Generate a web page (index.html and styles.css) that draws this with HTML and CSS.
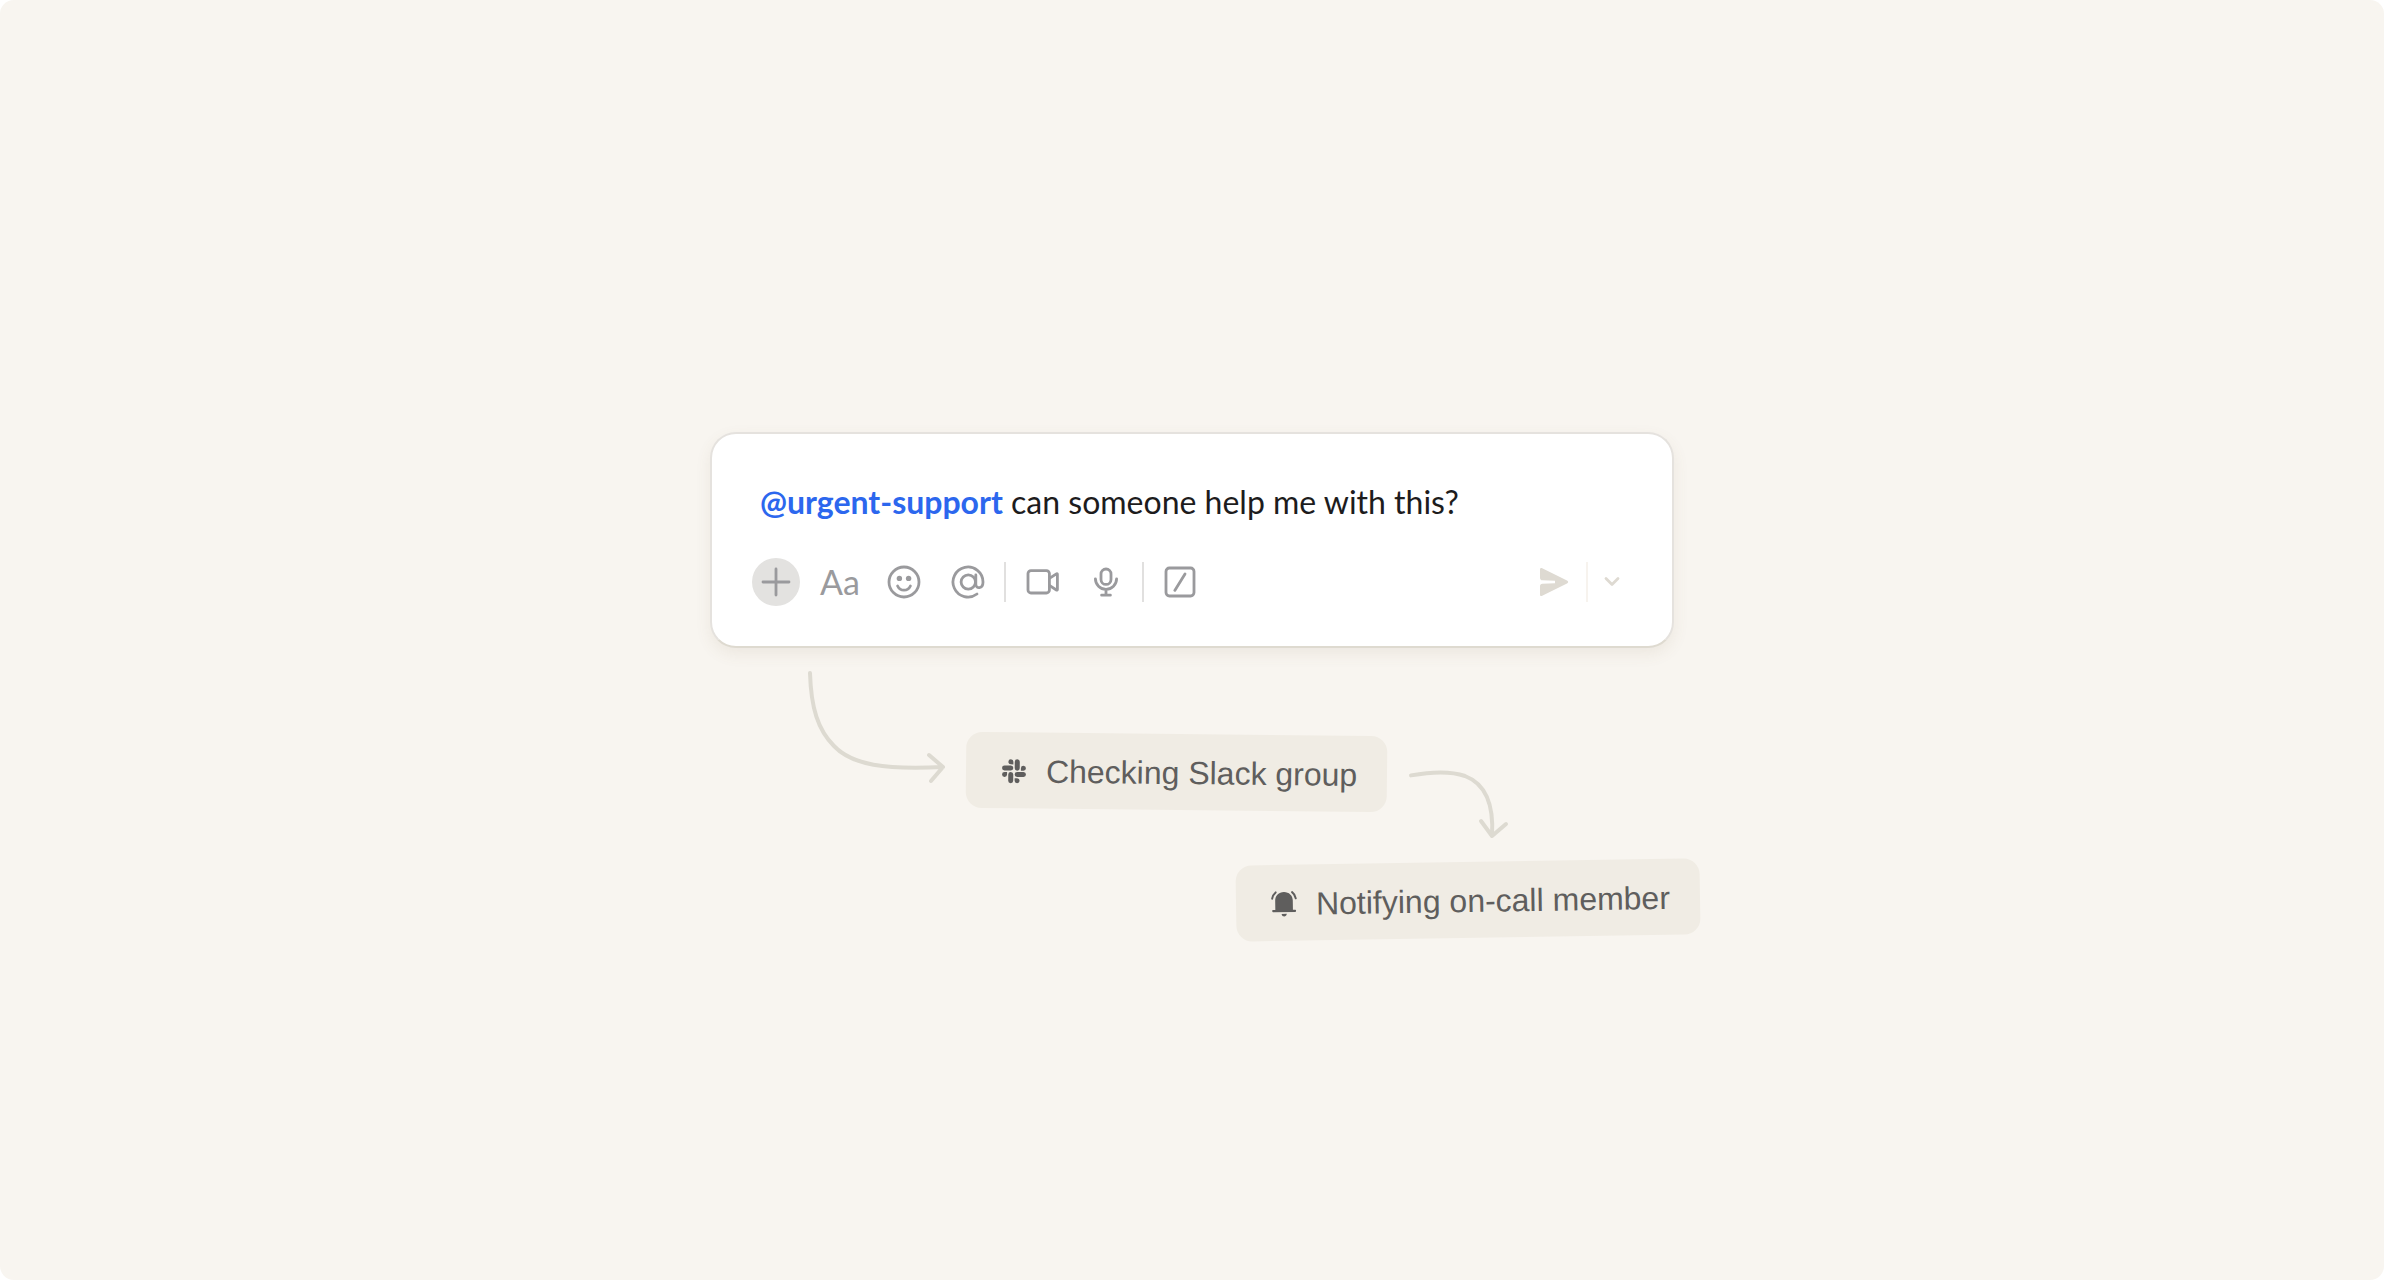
FILE: index.html
```
<!DOCTYPE html>
<html lang="en">
<head>
  <meta charset="UTF-8" />
  <meta name="viewport" content="width=device-width, initial-scale=1.0" />
  <title>Urgent support</title>
  <link rel="stylesheet" href="styles.css">
</head>
<body>
  <main class="stage">
    <div class="scene">
      <div class="composer">
        <div class="message" contenteditable="true" role="textbox" aria-label="Message"><strong class="mention">@urgent-support</strong> can someone help me with this?</div>
        <div class="toolbar">
          <div class="tools">
            <button class="tool add" type="button" aria-label="Add">
              <svg viewBox="0 0 48 48"><path d="M24 11v26M11 24h26" /></svg>
            </button>
            <button class="tool format" type="button">Aa</button>
            <button class="tool" type="button" aria-label="Emoji">
              <svg viewBox="0 0 48 48">
                <circle cx="24" cy="24" r="15" />
                <circle class="dot" cx="19.4" cy="20.4" r="2.7" />
                <circle class="dot" cx="28.6" cy="20.4" r="2.7" />
                <path d="M17.6 28c2.6 5.6 10.2 5.6 12.8 0" />
              </svg>
            </button>
            <button class="tool" type="button" aria-label="Mention">
              <svg viewBox="0 0 48 48">
                <circle cx="24.3" cy="24" r="7.2" />
                <path d="M31.8 17v9.2c0 5 7.2 5 7.2-2.2a15 15 0 1 0-6 12" />
              </svg>
            </button>
          </div>
          <span class="divider"></span>
          <div class="tools">
            <button class="tool" type="button" aria-label="Record video">
              <svg viewBox="0 0 48 48">
                <rect x="10" y="12.6" width="21.4" height="22.4" rx="3" />
                <path d="M31.4 20.4l7-4.6c.6-.4 1 0 1 .6v15c0 .6-.4 1-1 .6l-7-4.6" />
              </svg>
            </button>
            <button class="tool" type="button" aria-label="Record audio">
              <svg viewBox="0 0 48 48">
                <rect x="19" y="11" width="10" height="15.4" rx="5" />
                <path d="M13.4 20.8a10.6 10.6 0 0 0 21.2 0M24 31.6V37M19.6 37.2h8.8" />
              </svg>
            </button>
          </div>
          <span class="divider"></span>
          <button class="tool" type="button" aria-label="Slash command">
            <svg viewBox="0 0 48 48">
              <rect x="10" y="10" width="28" height="28" rx="3.4" />
              <path d="M29 16L18.8 32.4" />
            </svg>
          </button>
          <div class="send-group">
            <button class="tool send" type="button" aria-label="Send">
              <svg viewBox="0 0 48 48"><path d="M10 11.6c0-1.4.8-2 2.2-1.4L37 22.6c1.6.8 1.6 2 0 2.8L12.2 37.8c-1.4.6-2.2 0-2.2-1.4v-8.2c0-1.6.8-2.4 2.4-2.5l12.6-.5v-2.4l-12.6-.5c-1.6-.1-2.4-1-2.4-2.6z" /></svg>
            </button>
            <span class="divider light"></span>
            <button class="tool more" type="button" aria-label="Send options">
              <svg viewBox="0 0 32 48"><path d="M10 20.6l6 6 6-6" /></svg>
            </button>
          </div>
        </div>
      </div>

      <div class="steps">
        <div class="row">
          <svg class="arrow arrow-in" viewBox="0 0 152 120">
            <path d="M12 5c1 35 8 57 24 73 18 19 51 24 109 21M131 87l14 12-12 14" />
          </svg>
          <div class="chip tilt-right">
            <svg class="chip-icon" viewBox="0 0 24 24">
              <path d="M5.1 15.2a2.5 2.5 0 1 1-2.5-2.5h2.5zM6.3 15.2a2.5 2.5 0 0 1 5 0v6.3a2.5 2.5 0 0 1-5 0zM8.8 5.1a2.5 2.5 0 1 1 2.5-2.5v2.5zM8.8 6.3a2.5 2.5 0 0 1 0 5H2.5a2.5 2.5 0 0 1 0-5zM18.9 8.8a2.5 2.5 0 1 1 2.5 2.5h-2.5zM17.7 8.8a2.5 2.5 0 0 1-5 0V2.5a2.5 2.5 0 0 1 5 0zM15.2 18.9a2.5 2.5 0 1 1-2.5 2.5v-2.5zM15.2 17.7a2.5 2.5 0 0 1 0-5h6.3a2.5 2.5 0 0 1 0 5z" />
            </svg>
            <span>Checking Slack group</span>
          </div>
          <svg class="arrow arrow-out" viewBox="0 0 112 80">
            <path d="M8 11.4c22-4 41-4 54 .6 21 8 29 28 27 60M78 57l11 15 14-12" />
          </svg>
        </div>
        <div class="chip tilt-left">
          <svg class="chip-icon" viewBox="0 0 24 24">
            <path d="M12 0c5 0 8.8 3.6 8.8 8.6v9.4h2.4c1 0 1 2.2 0 2.2H.8c-1 0-1-2.2 0-2.2h2.4V8.6C3.2 3.6 7 0 12 0zM9.4 22h5.2c-.3 3.4-4.9 3.4-5.2 0z" />
            <path class="ring" d="M.2 6.6C.6 4 1.8 2 3.8.4M23.8 6.6C23.4 4 22.2 2 20.2.4" />
          </svg>
          <span>Notifying on-call member</span>
        </div>
      </div>
    </div>
  </main>
</body>
</html>
```
FILE: styles.css
```
* {
  box-sizing: border-box;
}
body {
  margin: 0;
  background-color: #fff;
}
.stage {
  display: flex;
  align-items: center;
  justify-content: center;
  min-height: 100vh;
  padding: 90px 40px 0;
  border-radius: 14px;
  background-color: #f8f5f0;
}
.scene {
  width: 100%;
  max-width: 964px;
}
.composer {
  padding: 40px 44px 40px 40px;
  border: 2px solid #e5e2de;
  border-bottom-color: #dedad0;
  border-radius: 26px;
  background-color: #fff;
  box-shadow: 0 6px 16px rgba(120, 105, 70, 0.09);
}
.message {
  padding: 0 8px;
  font-family: Lato, sans-serif;
  font-size: 32px;
  line-height: 56px;
  color: #1d1c1d;
  outline: none;
}
.mention {
  font-weight: 700;
  color: #2c67ee;
}
.toolbar {
  display: flex;
  align-items: center;
  gap: 12px;
  margin-top: 28px;
}
.tools {
  display: flex;
  gap: 16px;
}
.tool {
  width: 48px;
  height: 48px;
  padding: 0;
  border: none;
  border-radius: 50%;
  background: none;
  color: #9a9a9d;
  cursor: pointer;
}
.tool svg {
  display: block;
  width: 100%;
  height: 100%;
  fill: none;
  stroke: currentColor;
  stroke-width: 2.8;
  stroke-linecap: round;
  stroke-linejoin: round;
}
.tool .dot {
  fill: currentColor;
  stroke: none;
}
.add {
  background-color: #e3e2e0;
}
.format {
  font-family: Lato, sans-serif;
  font-size: 34px;
  line-height: 48px;
}
.divider {
  width: 2px;
  height: 40px;
  background-color: #e1e0df;
}
.send-group {
  display: flex;
  align-items: center;
  gap: 8px;
  margin-left: auto;
}
.light {
  background-color: #f7f3ee;
}
.send,
.more {
  color: #dedad2;
}
.tool.send svg {
  fill: currentColor;
  stroke: none;
}
.more {
  width: 32px;
}
.steps {
  display: flex;
  flex-direction: column;
  gap: 18px;
  margin: 20px -26px 0 0;
}
.row {
  display: flex;
  align-items: flex-start;
  margin-left: 88px;
}
.arrow {
  flex: none;
  fill: none;
  stroke: #dddad1;
  stroke-width: 4;
  stroke-linecap: round;
  stroke-linejoin: round;
}
.arrow-in {
  width: 152px;
  height: 120px;
}
.arrow-out {
  width: 112px;
  height: 80px;
  margin-top: 96px;
}
.chip {
  display: flex;
  align-items: center;
  gap: 20px;
  height: 76px;
  padding: 2px 30px 0 36px;
  border-radius: 16px;
  background-color: #f0ece4;
  color: #5f5e5d;
  font-family: "Liberation Sans", Arial, sans-serif;
  font-size: 32px;
  white-space: nowrap;
}
.row .chip {
  margin: 66px 16px 0;
}
.tilt-right {
  transform: rotate(0.6deg);
}
.tilt-left {
  align-self: flex-end;
  transform: rotate(-0.9deg);
}
.chip-icon {
  flex: none;
  width: 24px;
  height: 24px;
  fill: currentColor;
  overflow: visible;
}
.ring {
  fill: none;
  stroke: currentColor;
  stroke-width: 2;
  stroke-linecap: round;
}
```
